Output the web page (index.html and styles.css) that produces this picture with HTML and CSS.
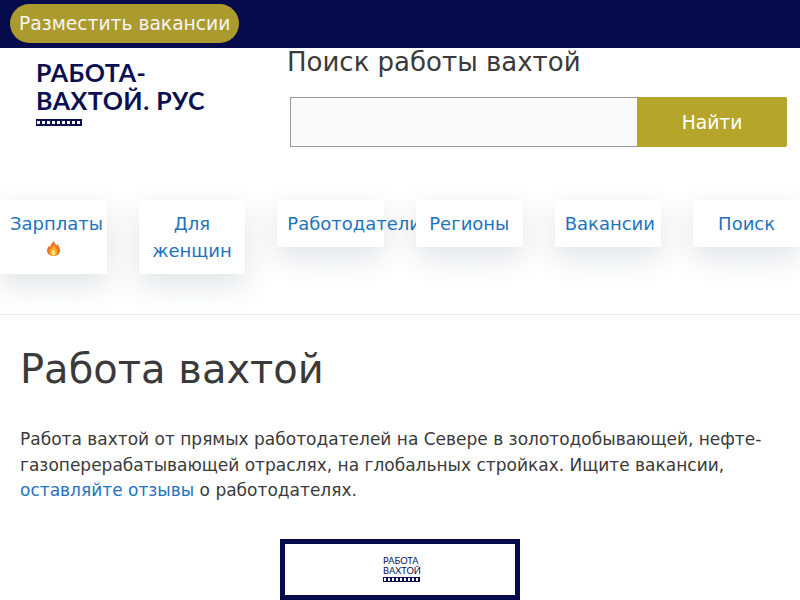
FILE: index.html

```html
<!DOCTYPE html>
<html lang="ru">
<head>
  <meta charset="UTF-8" />
  <meta name="viewport" content="width=device-width, initial-scale=1.0" />
  <title>Работа вахтой</title>
  <link rel="stylesheet" href="styles.css">
</head>
<body>
  <div class="topbar">
    <a class="post-job" href="#">Разместить вакансии</a>
  </div>

  <header class="site-header">
    <a class="logo" href="#">
      <span class="logo-text">РАБОТА-<br>ВАХТОЙ. РУС</span>
      <span class="logo-strip"></span>
    </a>
    <div class="search">
      <div class="search-title">Поиск работы вахтой</div>
      <form class="search-form">
        <input class="search-input" type="text" />
        <button class="search-button" type="button">Найти</button>
      </form>
    </div>
  </header>

  <nav class="menu">
    <a class="menu-item" href="#">Зарплаты <span class="fire"><svg width="13" height="15" viewBox="0 0 13 15"><path fill="#f2701d" d="M7 0c.3 2 1.500 3 2.500 4.500.4-.6.6-1.200.6-1.800 1.700 2 2.900 4.300 2.900 6.800C13 12.800 10.200 15 6.500 15S0 12.800 0 9.800c0-2 1-3.800 2.300-5.300 0 .9.300 1.500.8 2C3.200 4 5 2 7 0z"/><path fill="#fbac2c" d="M6.800 4c.3 1.500 3.700 3.300 3.700 6.500 0 2.500-1.800 4-4 4s-4-1.500-4-4c0-1.500.8-2.800 1.700-3.600.1.500.3.900.6 1.200C5 6.500 6 5.300 6.800 4z"/><path fill="#fee98a" d="M6.500 8.500c.4 1 1.800 1.900 1.800 3.500 0 1.500-.8 2.500-1.800 2.500S4.700 13.500 4.700 12c0-1.500 1.400-2.500 1.800-3.500z"/></svg></span></a>
    <a class="menu-item" href="#">Для женщин</a>
    <a class="menu-item menu-item-wide" href="#">Работодатели</a>
    <a class="menu-item" href="#">Регионы</a>
    <a class="menu-item" href="#">Вакансии</a>
    <a class="menu-item" href="#">Поиск</a>
  </nav>

  <main class="content">
    <h1>Работа вахтой</h1>
    <p>Работа вахтой от прямых работодателей на Севере в золотодобывающей, нефте-газоперерабатывающей отраслях, на глобальных стройках. Ищите вакансии, <a href="#">оставляйте отзывы</a> о работодателях.</p>
    <div class="banner">
      <div class="banner-logo">
        <span class="banner-text">РАБОТА<br>ВАХТОЙ</span>
        <span class="banner-strip"></span>
      </div>
    </div>
  </main>
</body>
</html>
```

FILE: styles.css

```css
* { box-sizing: border-box; margin: 0; padding: 0; }
html, body { height: 600px; overflow: hidden; }
body { font-family: "DejaVu Sans", sans-serif; background-color: #fff; color: #3a3a3a; font-size: 18px; }
a { color: #1e73be; text-decoration: none; }

.topbar {
  height: 48px;
  background-color: #060b4c;
  padding: 4px 10px;
}
.post-job {
  display: inline-block;
  height: 39px;
  line-height: 39px;
  padding: 0 9px;
  border-radius: 20px;
  background-color: #ab9a2e;
  color: #f5f5f5;
  font-size: 18.700px;
}

.site-header {
  display: flex;
  height: 152px;
}
.logo {
  display: block;
  width: 287px;
  padding: 10px 0 0 36px;
}
.logo-text {
  display: block;
  font-family: Lato, sans-serif;
  font-weight: 700;
  font-size: 25px;
  line-height: 28px;
  letter-spacing: 0.500px;
  color: #0a0f52;
}
.logo-strip {
  display: block;
  width: 46px;
  height: 7px;
  margin-top: 5px;
  padding: 2px 1px;
  background: repeating-linear-gradient(90deg, #fff 0 3px, #0a0f52 3px 5px) content-box, #0a0f52;
}
.search { flex: 1; }
.search-title {
  font-size: 26px;
  line-height: 28px;
  margin-bottom: 21px;
}
.search-form {
  display: flex;
  margin-left: 3px;
  margin-right: 13px;
}
.search-input {
  width: 348px;
  height: 50px;
  background-color: #fafafa;
  border: 1px solid #9b9b9b;
  font-size: 18px;
}
.search-button {
  width: 150px;
  height: 50px;
  margin-left: -1px;
  background-color: #b5a62b;
  border: none;
  border-radius: 0 2px 2px 0;
  color: #fff;
  font-family: inherit;
  font-size: 18.700px;
}

.menu {
  display: flex;
  align-items: flex-start;
  justify-content: space-between;
  border-bottom: 1px solid #e8e8e8;
  height: 115px;
}
.menu-item {
  display: block;
  width: 106.670px;
  padding: 10px;
  line-height: 27px;
  text-align: center;
  background-color: #fff;
  box-shadow: 0 10px 30px rgba(60, 70, 90, 0.16);
}
.menu-item-wide { white-space: nowrap; text-align: left; }
.fire { display: block; height: 27px; padding-top: 4px; line-height: 15px; }

.content { padding: 26px 20px 0; }
.content h1 {
  font-size: 40px;
  font-weight: 400;
  line-height: 56px;
  margin-bottom: 30px;
}
.content p {
  font-size: 17px;
  line-height: 25.500px;
}
.banner {
  display: flex;
  align-items: center;
  justify-content: center;
  width: 240px;
  height: 61px;
  margin: 35px auto 0;
  border: 5px solid #060b4c;
  background-color: #fff;
}
.banner-logo { width: 37px; margin-left: 3px; }
.banner-text {
  display: block;
  font-family: Lato, sans-serif;
  font-weight: 400;
  font-size: 9.300px;
  line-height: 10px;
  color: #0a0f52;
}
.banner-strip {
  display: block;
  width: 37px;
  height: 5px;
  margin-top: 1px;
  padding: 1px;
  background: repeating-linear-gradient(90deg, #fff 0 2px, #0a0f52 2px 4px) content-box, #0a0f52;
}
```
